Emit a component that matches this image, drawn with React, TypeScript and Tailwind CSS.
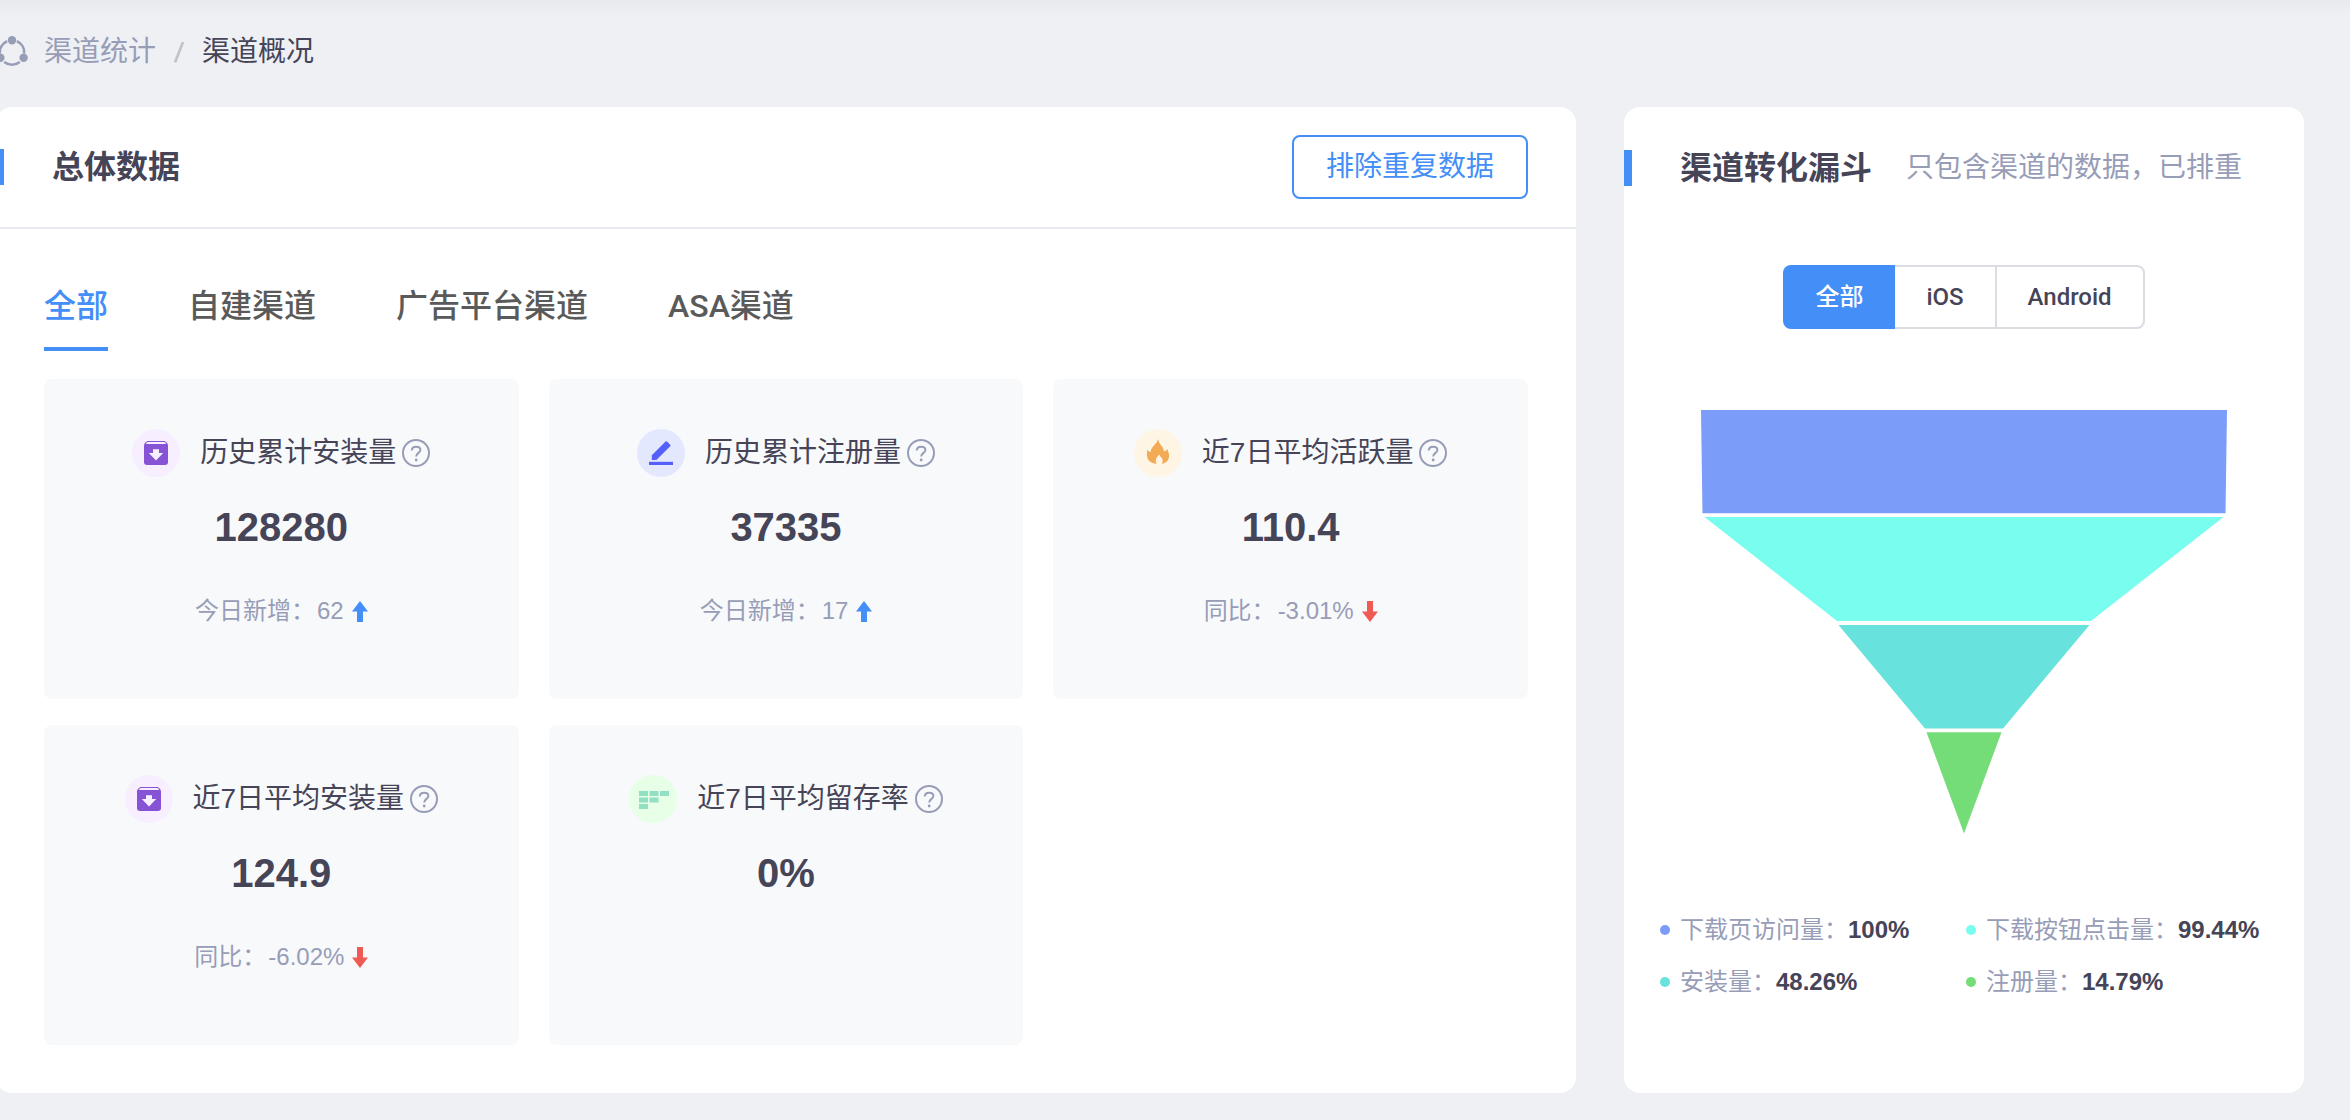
import React from 'react';

const MEDIUM = "font-['Roboto','Noto_Sans_CJK_SC',sans-serif] font-medium";

function ChannelIcon() {
  return (
    <svg className="size-8 shrink-0" viewBox="0 0 32 32" fill="none" stroke="#979db7" strokeWidth="2.6" aria-hidden="true">
      <path d="M20.9 5.200A12.300 12.300 0 0 1 28.200 17.400" />
      <path d="M11.100 5.200A12.300 12.300 0 0 0 3.800 17.400" />
      <path d="M8.200 26A12.500 12.500 0 0 0 23.800 26" />
      <g fill="#979db7" stroke="none">
        <circle cx="16" cy="4.2" r="4.2" />
        <circle cx="4.4" cy="21.8" r="4.2" />
        <circle cx="27.6" cy="21.8" r="4.2" />
      </g>
    </svg>
  );
}

function InstallIcon() {
  return (
    <svg className="size-6" viewBox="0 0 24 24" aria-hidden="true">
      <path d="M4 0H20C21.500 0 24 2.500 24 4.500V21a3 3 0 0 1-3 3H3a3 3 0 0 1-3-3V4.500C0 2.500 2.500 0 4 0Z" fill="#8553d4" />
      <path d="M4 1.100H20a2.200 2.200 0 0 1 2 1.900H2A2.200 2.200 0 0 1 4 1.100Z" fill="#f7efff" />
      <path d="M9 8.200h6v3.900h4.200L12 19.400 4.800 12.100H9Z" fill="#f7efff" />
    </svg>
  );
}

function RegisterIcon() {
  return (
    <svg className="size-6" viewBox="0 0 24 24" fill="#5560fa" aria-hidden="true">
      <path d="M2.800 14.200 16.600.6a1 1 0 0 1 1.400 0l3.200 3.200a1 1 0 0 1 0 1.400L7.400 19H2.800Z" />
      <path d="M0 20.800H24V24H0Z" />
    </svg>
  );
}

function FlameIcon() {
  return (
    <svg className="size-6 overflow-visible" viewBox="0 0 24 24" fill="#f2ab54" aria-hidden="true">
      <path d="M12 -2C12.400 1 14.200 3 16 5.400c1.200 1.600 1.800 3.200 1.900 5 1.700-.3 2.800-1.300 3.600-2.400.2 1.200.3 2 .9 3.200.9 2 .9 4 .3 6-1 3.200-3.400 5.200-6.900 5.800 1-1.700 1.200-3.600.5-5.200-.7-1.500-2.500-2.400-2.700-4.400-1.500.8-3 2.700-3.500 4.600-.5 1.800-.2 3.400.5 5C4.800 22 1.800 19.600 1.100 15.800c-.5-2.700.2-3.800.1-7.400.9 1 1.700 2.200 3.400 2.600.1-2.600 1.400-4.300 3-6.100C9.600 2.700 11.400 1 12-2Z" />
    </svg>
  );
}

function RetentionIcon() {
  return (
    <svg className="h-5 w-8" viewBox="0 0 32 20" fill="#92e0c3" aria-hidden="true">
      <path d="M2 2h9v5H2zM12.500 2h9v5h-9zM23 2h9v5h-9zM2 8.500h9v5H2zM12.500 8.500h9v5h-9zM2 15h9v5H2z" />
    </svg>
  );
}

function HelpIcon() {
  return (
    <svg className="size-7" viewBox="0 0 28 28" fill="none" stroke="#979db7" aria-hidden="true">
      <circle cx="14" cy="14" r="13" strokeWidth="2" />
      <path d="M9.800 11.400C9.800 9 11.500 7.700 14.100 7.700S18.400 9.100 18.400 11.100C18.400 13.900 14.200 14 14.200 17.600" strokeWidth="2" />
      <circle cx="14.200" cy="21" r="1.400" fill="#979db7" stroke="none" />
    </svg>
  );
}

function Arrow({ up }: { up: boolean }) {
  return up ? (
    <svg className="h-[21px] w-4" viewBox="0 0 16 21" fill="#448ef7" role="img" aria-label="上升">
      <path d="M8 0 16 10.500H11V21H5V10.500H0Z" />
    </svg>
  ) : (
    <svg className="h-[21px] w-4" viewBox="0 0 16 21" fill="#ef5b54" role="img" aria-label="下降">
      <path d="M8 21 16 10.500H11V0H5V10.500H0Z" />
    </svg>
  );
}

type Stat = {
  title: string;
  value: string;
  note?: string;
  delta?: string;
  up?: boolean;
  tint: string;
  icon: React.ReactNode;
};

const stats: Stat[] = [
  { title: '历史累计安装量', value: '128280', note: '今日新增：', delta: '62', up: true, tint: 'bg-[#f7efff]', icon: <InstallIcon /> },
  { title: '历史累计注册量', value: '37335', note: '今日新增：', delta: '17', up: true, tint: 'bg-[#e4e8fe]', icon: <RegisterIcon /> },
  { title: '近7日平均活跃量', value: '110.4', note: '同比：', delta: '-3.01%', up: false, tint: 'bg-[#fff5e5]', icon: <FlameIcon /> },
  { title: '近7日平均安装量', value: '124.9', note: '同比：', delta: '-6.02%', up: false, tint: 'bg-[#f7efff]', icon: <InstallIcon /> },
  { title: '近7日平均留存率', value: '0%', tint: 'bg-[#e6ffe6]', icon: <RetentionIcon /> },
];

function StatCard({ stat }: { stat: Stat }) {
  return (
    <article className="flex min-h-80 flex-col items-center rounded-lg bg-[#f8f9fb] pt-[50px]">
      <div className="flex h-12 items-center">
        <span className={`mr-5 flex size-12 items-center justify-center rounded-full ${stat.tint}`}>{stat.icon}</span>
        <h3 className="text-[28px] leading-10 whitespace-nowrap">{stat.title}</h3>
        <button type="button" aria-label={`${stat.title}说明`} className="ml-1.5">
          <HelpIcon />
        </button>
      </div>
      <p className="mt-[30px] text-[40px] leading-10 font-bold">{stat.value}</p>
      {stat.note && (
        <p className="mt-12 flex items-center text-2xl leading-8 text-[#979db7]">
          {stat.note}
          <span className="ml-0.5">{stat.delta}</span>
          <span className="ml-2">
            <Arrow up={!!stat.up} />
          </span>
        </p>
      )}
    </article>
  );
}

const tabs = ['全部', '自建渠道', '广告平台渠道', 'ASA渠道'];

const legend = [
  { label: '下载页访问量：', value: '100%', dot: 'bg-[#7b9cf8]' },
  { label: '下载按钮点击量：', value: '99.44%', dot: 'bg-[#79fdee]' },
  { label: '安装量：', value: '48.26%', dot: 'bg-[#68e2dc]' },
  { label: '注册量：', value: '14.79%', dot: 'bg-[#74dd78]' },
];

export default function App() {
  return (
    <div className="min-h-screen overflow-x-hidden bg-[#eff0f4] pb-[26px] font-['Liberation_Sans','Noto_Sans_CJK_SC',sans-serif] text-[#464457]">
      <div className="h-4 bg-linear-to-b from-[#e9eaee] to-[#eff0f4]" />
      <nav aria-label="面包屑" className="mt-4 mb-[35px] -ml-1 flex h-10 items-center text-[28px] leading-10">
        <ChannelIcon />
        <a href="#channels" className="ml-4 text-[#979db7]">渠道统计</a>
        <svg className="mx-[17px] h-6 w-3" viewBox="0 0 12 24" stroke="#c3c4cb" strokeWidth="2.800" aria-hidden="true">
          <path d="M2 22.500 10 2" />
        </svg>
        <span aria-current="page">渠道概况</span>
      </nav>

      <main className="-ml-1 grid grid-cols-[minmax(0,1580fr)_minmax(0,680fr)] gap-12 pr-[46px]">
        <section className="rounded-2xl bg-white">
          <header className="flex h-[122px] items-center border-b-2 border-[#e8e9ef] pr-12">
            <span className="h-9 w-2 bg-[#448ef7]" />
            <h2 className="ml-12 text-[32px] leading-10 font-bold">总体数据</h2>
            <button type="button" className="ml-auto h-16 rounded-lg border-2 border-[#448ef7] px-8 text-[28px] text-[#448ef7]">
              排除重复数据
            </button>
          </header>
          <div className="px-12 pt-12 pb-12">
            <div role="tablist" className="flex gap-20">
              {tabs.map((t, i) => (
                <button
                  key={t}
                  type="button"
                  role="tab"
                  aria-selected={i === 0}
                  className={`h-[74px] border-b-4 pb-3 text-[32px] leading-14 ${MEDIUM} ${i === 0 ? 'border-[#448ef7] text-[#448ef7]' : 'border-transparent text-[#5a5a5a]'}`}
                >
                  {t}
                </button>
              ))}
            </div>
            <div className="mt-7 grid grid-cols-3 gap-x-[30px] gap-y-[26px]">
              {stats.map((s) => (
                <StatCard key={s.title} stat={s} />
              ))}
            </div>
          </div>
        </section>

        <section className="rounded-2xl bg-white">
          <header className="flex h-[122px] items-center">
            <span className="h-9 w-2 bg-[#448ef7]" />
            <h2 className="ml-12 text-[32px] leading-10 font-bold whitespace-nowrap">渠道转化漏斗</h2>
            <p className="ml-[34px] text-[28px] leading-10 whitespace-nowrap text-[#979db7]">只包含渠道的数据，已排重</p>
          </header>
          <div className={`mt-9 flex justify-center text-2xl ${MEDIUM}`}>
            <button type="button" aria-pressed="true" className="h-16 rounded-l-lg bg-[#448ef7] px-8 text-white">全部</button>
            <button type="button" aria-pressed="false" className="h-16 border-y-2 border-r-2 border-[#dcdde3] px-[31px]">iOS</button>
            <button type="button" aria-pressed="false" className="h-16 rounded-r-lg border-y-2 border-r-2 border-[#dcdde3] px-[31px]">Android</button>
          </div>
          <svg className="mx-auto mt-20 h-[426px] w-[526px]" viewBox="0 0 526 426" role="img" aria-label="渠道转化漏斗图">
            <path d="M0 1H526L524.500 104.300H1.500Z" fill="#7b9cf8" />
            <path d="M3.500 108H522.500L390 212H136Z" fill="#79fdee" />
            <path d="M137.500 216H388.500L302 319.600H224Z" fill="#68e2dc" />
            <path d="M225.500 323.300H300.500L263 424.500Z" fill="#74dd78" />
          </svg>
          <ul className="mt-[77px] grid grid-cols-2 gap-x-1 gap-y-4 px-9 text-2xl leading-9">
            {legend.map((l) => (
              <li key={l.label} className="flex items-center whitespace-nowrap">
                <span className={`mr-2.5 size-2.5 rounded-full ${l.dot}`} />
                <span className="text-[#979db7]">{l.label}</span>
                <strong className="font-bold">{l.value}</strong>
              </li>
            ))}
          </ul>
        </section>
      </main>
    </div>
  );
}
